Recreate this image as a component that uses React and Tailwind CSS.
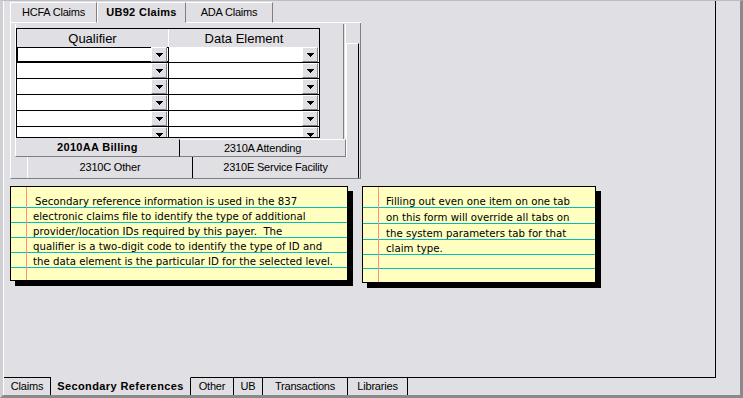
import React from "react";

function Tri() {
  return (
    <svg width="7" height="4" viewBox="0 0 7 4" shapeRendering="crispEdges">
      <polygon points="0,0 7,0 3.5,4" fill="#000" />
    </svg>
  );
}

function Btn() {
  return (
    <div className="w-[16px] h-full shrink-0 bg-[#e0dfe3] border-t border-t-white border-l border-l-white border-r border-r-[#808080] border-b border-b-[#808080] flex items-center justify-center">
      <Tri />
    </div>
  );
}

function GridRow({ first }) {
  return (
    <div className="flex h-[16px] shrink-0 border-b border-b-black">
      <div
        className={
          first
            ? "w-[151px] h-full bg-white flex justify-end pr-px shadow-[inset_1px_1px_0_#000,inset_0_-1px_0_#000]"
            : "w-[151px] h-full bg-white flex justify-end pr-px"
        }
      >
        <Btn />
      </div>
      <div className="w-px h-full bg-black" />
      <div className="w-[150px] h-full bg-white flex justify-end pr-px">
        <Btn />
      </div>
    </div>
  );
}

function Grid() {
  return (
    <div className="w-[304px] h-[110px] border border-black overflow-hidden flex flex-col">
      <div className="flex h-[18px] shrink-0 bg-[#e0dfe3] text-[13px] leading-none">
        <div className="w-[151px] flex items-center justify-center">Qualifier</div>
        <div className="w-px bg-white" />
        <div className="w-[150px] flex items-center justify-center">Data Element</div>
      </div>
      <GridRow first />
      <GridRow />
      <GridRow />
      <GridRow />
      <GridRow />
      <GridRow />
    </div>
  );
}

function NoteRow({ h, children, first }) {
  return (
    <div
      className={
        "shrink-0 border-b border-b-[#00bebe] flex items-end leading-[10px] whitespace-nowrap " + h
      }
    >
      {children}
    </div>
  );
}

export default function App() {
  return (
    <div className="w-[743px] h-[398px] overflow-hidden bg-[#e0dfe3] border-t border-t-[#bdbdc1] border-l-[3px] border-l-[#cfcfd3] border-r-[3px] border-r-[#8a8a8a] border-b-[3px] border-b-[#8a8a8a] font-['Liberation_Sans',Arial,sans-serif] text-black">
      <div className="h-full flex flex-col border-l border-l-white">
        {/* page + right spacer */}
        <div className="flex h-[376px] shrink-0">
          <div className="w-[712px] h-full border-r border-r-black pl-[6px] pt-px flex flex-col">
            {/* Top tab control */}
            <div className="w-[351px] flex flex-col">
              <div className="flex h-[21px] text-[11px] tracking-[-0.2px]">
                <div className="w-[87px] border-t border-t-white border-l border-l-white border-r border-r-[#808080] border-b border-b-white flex items-center justify-center">
                  HCFA Claims
                </div>
                <div className="w-[89px] border-t border-t-white border-l border-l-white border-r border-r-[#808080] border-b border-b-transparent flex items-center justify-center font-bold tracking-[0.3px]">
                  UB92 Claims
                </div>
                <div className="w-[87px] border-t border-t-white border-r border-r-[#808080] border-b border-b-white flex items-center justify-center">
                  ADA Claims
                </div>
                <div className="w-[88px] border-b border-b-white" />
              </div>
              <div className="h-[156px] border-l border-l-white border-r border-r-[#808080] border-b border-b-[#808080] pl-[4px] pt-px flex flex-col">
                <div className="flex h-[115px] shrink-0">
                  <div className="w-[329px] h-full border-l border-l-white border-r border-r-[#808080] pt-[4px]">
                    <Grid />
                  </div>
                  <div className="w-px" />
                  <div className="w-px bg-white" />
                  <div className="w-[13px] mt-[19px] border-l border-l-white border-t border-t-white border-r border-r-black" />
                </div>
                <div className="flex h-[18px] shrink-0 text-[11px] tracking-[-0.2px]">
                  <div className="w-[164px] border-l border-l-white border-b border-b-[#808080] flex items-center justify-center font-bold tracking-[0.3px]">
                    2010AA Billing
                  </div>
                  <div className="w-[167px] border-l border-l-black border-t border-t-white border-r border-r-[#808080] border-b border-b-[#808080] flex items-center justify-center">
                    2310A Attending
                  </div>
                  <div className="w-[13px] border-l border-l-white border-r border-r-black" />
                </div>
                <div className="flex h-[21px] shrink-0 pl-[12px] text-[11px] tracking-[-0.2px]">
                  <div className="w-[165px] border-l border-l-white flex items-center justify-center">
                    2310C Other
                  </div>
                  <div className="w-[167px] border-l border-l-black border-r border-r-black flex items-center justify-center">
                    2310E Service Facility
                  </div>
                </div>
              </div>
            </div>

            {/* Notes */}
            <div className="flex items-start mt-[7px] font-['DejaVu_Sans',sans-serif] text-[10.2px]">
              <div className="relative w-[338px] h-[95px] bg-[#ffffc0] border border-black shadow-[5px_5px_0_#000] flex flex-col">
                <div className="absolute left-[15px] top-0 bottom-0 w-px bg-[#ff8c8c]" />
                <NoteRow h="h-[21px] pl-[24px]">Secondary reference information is used in the 837</NoteRow>
                <NoteRow h="h-[15px] pl-[22px]">electronic claims file to identify the type of additional</NoteRow>
                <NoteRow h="h-[15px] pl-[22px]">provider/location IDs required by this payer.&nbsp; The</NoteRow>
                <NoteRow h="h-[15px] pl-[22px]">qualifier is a two-digit code to identify the type of ID and</NoteRow>
                <NoteRow h="h-[15px] pl-[22px]">the data element is the particular ID for the selected level.</NoteRow>
              </div>
              <div className="relative ml-[14px] w-[234px] h-[97px] bg-[#ffffc0] border border-black shadow-[5px_5px_0_#000] flex flex-col">
                <div className="absolute left-[15px] top-0 bottom-0 w-px bg-[#ff8c8c]" />
                <NoteRow h="h-[21px] pl-[23px]">Filling out even one item on one tab</NoteRow>
                <NoteRow h="h-[16px] pl-[23px]">on this form will override all tabs on</NoteRow>
                <NoteRow h="h-[16px] pl-[23px]">the system parameters tab for that</NoteRow>
                <NoteRow h="h-[15px] pl-[23px]">claim type.</NoteRow>
                <NoteRow h="h-[14px] pl-[23px]"></NoteRow>
              </div>
            </div>
          </div>
          <div className="flex-1" />
        </div>

        {/* bottom tabs */}
        <div className="flex h-[18px] shrink-0 text-[11px] tracking-[-0.2px]">
          <div className="w-[47px] border-t border-t-black border-r border-r-black flex items-center justify-center">Claims</div>
          <div className="w-[140px] border-t border-t-transparent border-r border-r-black flex items-center justify-center font-bold tracking-[0.4px]">Secondary References</div>
          <div className="w-[43px] border-t border-t-black border-r border-r-black flex items-center justify-center">Other</div>
          <div className="w-[29px] border-t border-t-black border-r border-r-black flex items-center justify-center">UB</div>
          <div className="w-[85px] border-t border-t-black border-r border-r-black flex items-center justify-center">Transactions</div>
          <div className="w-[60px] border-t border-t-black border-r border-r-black flex items-center justify-center">Libraries</div>
          <div className="w-[308px] border-t border-t-black" />
          <div className="flex-1" />
        </div>
      </div>
    </div>
  );
}
